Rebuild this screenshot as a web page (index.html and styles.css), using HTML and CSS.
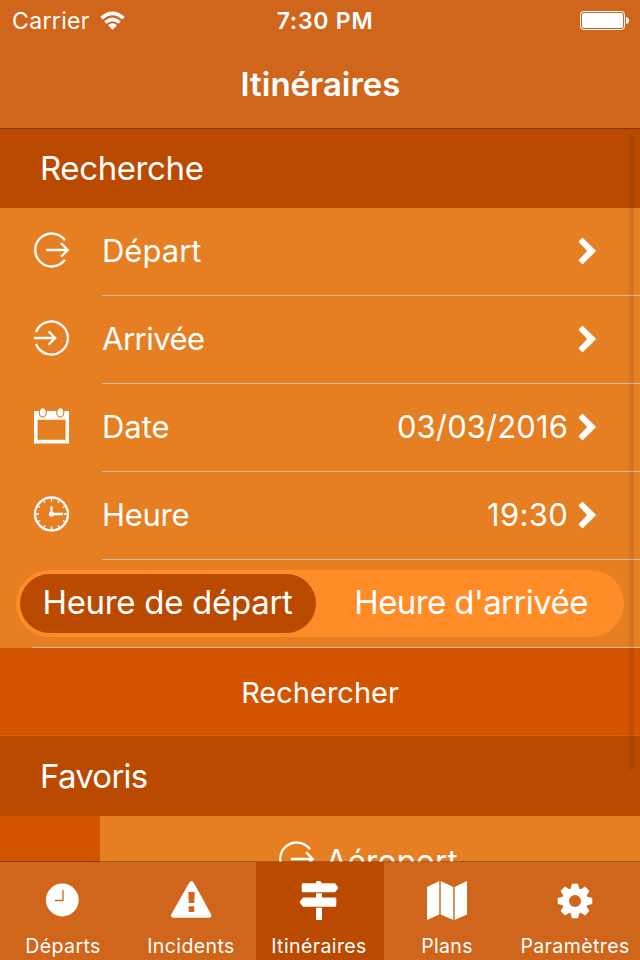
FILE: index.html
```html
<!DOCTYPE html>
<html lang="fr">
<head>
<meta charset="utf-8">
<title>Itinéraires</title>
<link rel="stylesheet" href="styles.css">
</head>
<body>
<svg class="defs" aria-hidden="true">
  <symbol id="depart" viewBox="0 0 37 36"><path d="M32 8.2A16.5 16.5 0 1 0 32 27.8M13 18H35M28 11.3L34.8 18L28 24.7"/></symbol>
  <symbol id="arrivee" viewBox="0 0 37 36"><path d="M3 12A16.5 16.5 0 1 1 3 24M1 18H22.3M15.5 11.3L22.2 18L15.5 24.7"/></symbol>
  <symbol id="chevron" viewBox="0 0 18 28"><path d="M4.500 1.300L17.200 14L4.500 26.700L1.200 23.400L10 14L1.200 4.600Z"/></symbol>
</svg>
<div class="screen">
  <header class="nav">
    <div class="status">
      <div class="carrier"><span>Carrier</span>
        <svg class="wifi" viewBox="0 0 25 19"><path class="arc" d="M1.500 7.200Q12.500-2.400 23.500 7.200M5.300 11.500Q12.500 5.300 19.700 11.500"/><path d="M8 14.300Q12.500 10.300 17 14.300L12.500 18.800Z"/></svg>
      </div>
      <div class="clock">7:30 PM</div>
      <svg class="battery" viewBox="0 0 50 20"><rect class="shell" x=".5" y=".5" width="44" height="18" rx="3"/><rect x="2" y="2" width="41" height="15" rx="1.8"/><path d="M46 6Q49 6.500 49 9.500Q49 12.500 46 13Z"/></svg>
    </div>
    <h1>Itinéraires</h1>
  </header>

  <main class="content">
    <h2 class="t-recherche">Recherche</h2>
    <div class="row">
      <svg class="icon line"><use href="#depart"/></svg>
      <div class="cell"><span class="t-depart">Départ</span><svg class="chev"><use href="#chevron"/></svg></div>
    </div>
    <div class="row">
      <svg class="icon line"><use href="#arrivee"/></svg>
      <div class="cell"><span class="t-arrivee">Arrivée</span><svg class="chev"><use href="#chevron"/></svg></div>
    </div>
    <div class="row">
      <svg class="icon" viewBox="0 0 37 36"><path fill-rule="evenodd" d="M1 3H36V35.500H1ZM4.600 11.800V31.800H32.600V11.800Z"/><g class="ring"><ellipse cx="9.700" cy="4.400" rx="3.500" ry="4.700"/><ellipse cx="27.300" cy="4.400" rx="3.500" ry="4.700"/></g></svg>
      <div class="cell"><span>Date</span><span class="value t-date">03/03/2016</span><svg class="chev"><use href="#chevron"/></svg></div>
    </div>
    <div class="row">
      <svg class="icon line" viewBox="0 0 37 36"><circle cx="18.500" cy="18" r="16.500"/><path class="ticks" d="M18.500 2V5.500M18.500 30.500V34M2.500 18H6M31 18H34.500M10.500 4.140L12 6.740M26.500 4.140L25 6.740M10.500 31.860L12 29.260M26.500 31.860L25 29.260M4.640 10L7.240 11.500M32.360 10L29.760 11.500M4.640 26L7.240 24.500M32.360 26L29.760 24.500"/><path d="M18.500 10.500V18H30"/><circle class="dot" cx="18.500" cy="18" r="2.600"/></svg>
      <div class="cell"><span class="t-heure">Heure</span><span class="value t-time">19:30</span><svg class="chev"><use href="#chevron"/></svg></div>
    </div>
    <div class="choice">
      <div class="segments"><div class="segment on">Heure de départ</div><div class="segment off">Heure d'arrivée</div></div>
    </div>
    <div class="search">Rechercher</div>
    <h2 class="t-favoris">Favoris</h2>
    <div class="favorite">
      <svg class="icon line"><use href="#depart"/></svg><span>Aéroport</span>
    </div>
    <div class="scrollbar"></div>
  </main>

  <nav class="tabs">
    <div class="tab"><svg viewBox="0 0 44 44"><circle cx="21.300" cy="22" r="16.400"/><path class="cut" d="M22 12V22.500H14"/></svg><span>Départs</span></div>
    <div class="tab"><svg viewBox="0 0 44 44"><path transform="translate(.7 0)" fill-rule="evenodd" d="M20.300 3.700Q21.800 2.200 23.300 3.700Q24.500 5 41.500 36.500Q42.200 39.500 39.500 39.800H3.500Q.8 39.500 1.500 36.500Q19.500 4.500 20.300 3.700ZM18.600 14L19 25H24.600L25 14ZM19 28.300V34H24.600V28.300Z"/></svg><span>Incidents</span></div>
    <div class="tab active"><svg viewBox="0 0 44 44"><path d="M19 5.200V4.500Q19 3 20.500 3H22.500Q24 3 24.500 4.500V5.200H38L41 9.200Q41.300 10 41 10.700L38 14.200H6Q4.700 14.200 4.700 13V6.500Q4.700 5.200 6 5.200ZM19 15.200H25V19.500H38Q39.300 19.500 39.300 20.700V27.400Q39.300 28.700 38 28.700H6L3 25Q2.700 24 3 23.300L6 19.500H19ZM19 29.700H25V42H19Z"/></svg><span>Itinéraires</span></div>
    <div class="tab"><svg viewBox="0 0 44 44"><path d="M2 9L14.300 3V36.500L2 42ZM15.700 3L28.300 9V42L15.700 36.500ZM29.700 9L42 3V36.500L29.700 42Z"/></svg><span class="t-plans">Plans</span></div>
    <div class="tab"><svg viewBox="0 0 44 44"><g transform="translate(22 23)"><g id="teeth"><path id="t" d="M-4.600-11L-3.100-17.300H3.100L4.600-11V11L3.100 17.300H-3.100L-4.600 11Z"/><use href="#t" transform="rotate(45)"/><use href="#t" transform="rotate(90)"/><use href="#t" transform="rotate(135)"/></g><circle r="13"/><circle class="hole" r="6"/></g></svg><span>Paramètres</span></div>
  </nav>
</div>
</body>
</html>
```
FILE: styles.css
```css
* { box-sizing: border-box; }
body { margin: 0; font-family: Inter, "Liberation Sans", sans-serif; font-weight: 370; color: #fff; }
svg { display: block; flex: none; fill: #fff; }
h1, h2 { margin: 0; }
.defs { display: none; }
.screen { width: 640px; height: 960px; display: flex; flex-direction: column; overflow: hidden; background: #e67e22; }

.nav { height: 129px; flex: none; background: #d0651c; border-bottom: 1px solid #803707; }
.status { height: 40px; display: grid; grid-template-columns: 1fr auto 1fr; align-items: center; padding: 1px 10px 0 12px; font-size: 23px; line-height: 40px; }
.carrier { display: flex; align-items: center; gap: 10px; letter-spacing: .35px; }
.wifi { width: 25px; height: 19px; margin-top: -1px; }
.arc { fill: none; stroke: #fff; stroke-width: 3.600; }
.clock { padding-left: 8px; font-weight: 600; letter-spacing: .75px; }
.battery { width: 50px; height: 20px; justify-self: end; }
.shell { fill: none; stroke: #fff; stroke-width: 1; }
h1 { padding-left: 1px; font-size: 33px; line-height: 88px; font-weight: 600; text-align: center; }

.content { position: relative; flex: 1; min-height: 0; overflow: hidden; }
h2 { height: 80px; padding-left: 40px; background: #b94a00; font-size: 33px; line-height: 80px; font-weight: 370; }
.t-recherche { height: 79px; line-height: 79px; letter-spacing: -.4px; }
.t-favoris { letter-spacing: -.75px; }
.row { height: 88px; display: flex; align-items: center; padding-left: 33px; font-size: 31px; }
.icon { width: 37px; height: 36px; margin: 0 32px 4px 0; }
.line { fill: none; stroke: #fff; stroke-width: 2.300; }
.ticks { stroke-width: 1.300; }
.dot { fill: #fff; stroke: none; }
.ring { stroke: #e67e22; stroke-width: 1.200; }
.cell { flex: 1; height: 88px; display: flex; align-items: center; padding: 0 44px 2px 0; border-bottom: 1px solid #d3bca6; }
.value { margin-left: auto; margin-right: 10px; }
.t-arrivee { letter-spacing: -.5px; }
.t-heure { letter-spacing: -.3px; }
.t-date { letter-spacing: .1px; }
.t-time { letter-spacing: .3px; }
.chev { width: 18px; height: 28px; margin: 1px 0 0 auto; stroke: #fff; stroke-width: 1.200; stroke-linejoin: round; }
.value + .chev { margin-left: 0; }
.choice { height: 88px; padding: 10px 16px; background: linear-gradient(#d3bca6, #d3bca6) 32px 87px / 608px 1px no-repeat; }
.segments { height: 67px; display: flex; padding: 4px; border-radius: 34px; background: #ff8c26; font-size: 33px; line-height: 56px; text-align: center; }
.segment { height: 59px; flex: 0 0 296px; border-radius: 30px; }
.on { padding-right: 1px; background: #b94a00; letter-spacing: -.3px; }
.off { flex: 1; padding-left: 6px; letter-spacing: -.6px; }
.search { height: 88px; background: #d35400; border-bottom: 1px solid #dd6305; font-size: 29px; line-height: 89px; text-align: center; }
.favorite { height: 88px; display: flex; justify-content: center; align-items: center; padding-right: 2px; border-left: 100px solid #d35400; font-size: 31px; letter-spacing: .4px; }
.favorite .icon { margin: 0 11px 2px -2px; }
.scrollbar { position: absolute; top: 5px; left: 629px; width: 5px; height: 636px; border-radius: 3px; background: rgba(0, 0, 0, .08); }

.tabs { position: relative; height: 99px; flex: none; margin-top: -1px; display: flex; border-top: 1px solid rgba(0, 0, 0, .3); background: #d0651c padding-box; }
.tab { flex: 1; display: flex; flex-direction: column; align-items: center; padding: 16px 2px 0 0; font-size: 19.500px; letter-spacing: .4px; line-height: 24px; }
.tab svg { width: 44px; height: 44px; margin-bottom: 12px; }
.active { background: #b94a00; }
.t-plans { letter-spacing: .35px; }
.cut { fill: none; stroke: #d0651c; stroke-width: 1.300; }
.hole { fill: #d0651c; }
```
